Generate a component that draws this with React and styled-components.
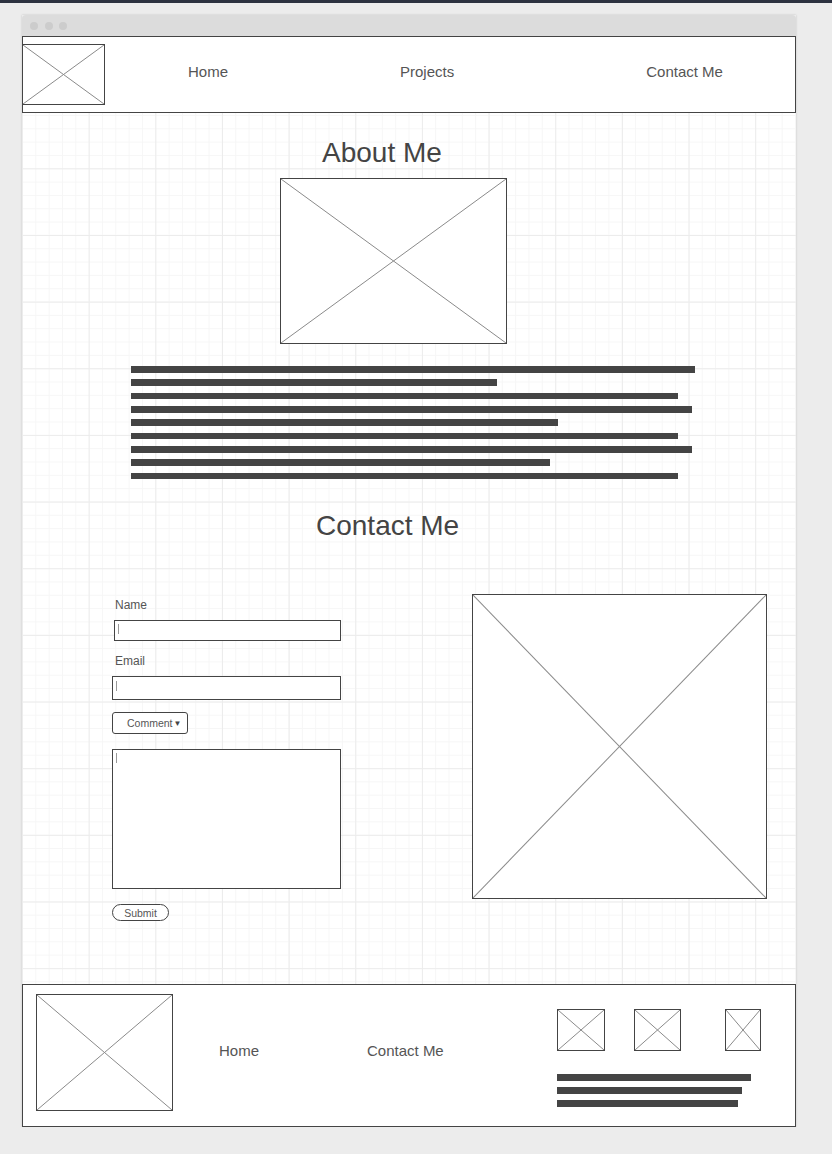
import React from 'react'
import styled, { createGlobalStyle } from 'styled-components'

const GlobalStyle = createGlobalStyle`
  html, body {
    margin: 0;
    padding: 0;
    background: #ececec;
    font-family: 'Liberation Sans', Arial, sans-serif;
  }
`

const TopBar = styled.div`
  height: 3px;
  background: #2d3240;
`
const Window = styled.div`
  width: 774px;
  margin: 12px 0 0 22px;
  box-shadow: 0 0 2px rgba(0, 0, 0, 0.18);
`
const TitleBar = styled.div`
  height: 21px;
  background: #dcdcdc;
  border-radius: 4px 4px 0 0;
  display: flex;
  align-items: center;
  gap: 6.5px;
  padding-left: 8px;
`
const Dot = styled.span`
  width: 8px;
  height: 8px;
  border-radius: 50%;
  background: #cccccc;
`
const Canvas = styled.div`
  background-color: #fff;
  background-image:
    linear-gradient(#ececec 1px, transparent 1px),
    linear-gradient(90deg, #ececec 1px, transparent 1px),
    linear-gradient(#f6f6f6 1px, transparent 1px),
    linear-gradient(90deg, #f6f6f6 1px, transparent 1px);
  background-size: 66.67px 66.67px, 66.67px 66.67px, 13.333px 13.333px, 13.333px 13.333px;
  background-position: 0 -1px;
`
const Header = styled.header`
  height: 75px;
  border: 1px solid #444;
  background: #fff;
  display: flex;
  align-items: flex-start;
`
const NavLink = styled.a`
  font-size: 15px;
  line-height: 18px;
  color: #555;
  margin-left: ${p => p.$ml}px;
  margin-top: 26px;
  text-decoration: none;
`
const Box = styled.div`
  position: relative;
  flex: none;
  box-sizing: border-box;
  width: ${p => p.$w}px;
  height: ${p => p.$h}px;
  border: 1px solid #444;
  background: #fff;
  margin-left: ${p => p.$ml || 0}px;
  margin-top: ${p => p.$mt || 0}px;
  svg {
    display: block;
    width: 100%;
    height: 100%;
  }
`

const Placeholder = props => (
  <Box {...props}>
    <svg viewBox="0 0 100 100" preserveAspectRatio="none">
      <line x1="0" y1="0" x2="100" y2="100" stroke="#8a8a8a" strokeWidth="1" vectorEffect="non-scaling-stroke" />
      <line x1="100" y1="0" x2="0" y2="100" stroke="#8a8a8a" strokeWidth="1" vectorEffect="non-scaling-stroke" />
    </svg>
  </Box>
)

const Main = styled.main`
  padding-bottom: 63px;
`
const Heading = styled.h2`
  margin: ${p => p.$mt}px 0 0 ${p => p.$ml}px;
  font-size: 28px;
  line-height: 32px;
  font-weight: 400;
  color: #444;
  width: fit-content;
`
const TextBlock = styled.div`
  display: flex;
  flex-direction: column;
  gap: 6.67px;
  margin: 22px 0 0 109px;
`
const Bar = styled.div`
  height: 6.67px;
  background: #444;
  width: ${p => p.$w}px;
`
const ContactRow = styled.section`
  display: flex;
  align-items: flex-start;
  margin-top: 51px;
  padding-left: 90px;
`
const Form = styled.form`
  width: 229px;
  display: flex;
  flex-direction: column;
  align-items: flex-start;
  margin-right: 131px;
`
const Label = styled.label`
  font-size: 12px;
  line-height: 16px;
  color: #555;
  margin: ${p => p.$mt}px 0 0 3px;
`
const Field = styled.div`
  box-sizing: border-box;
  border: 1px solid #444;
  background: #fff;
  width: ${p => p.$w}px;
  height: ${p => p.$h}px;
  margin: ${p => p.$mt}px 0 0 ${p => p.$ml || 0}px;
`
const Caret = styled.span`
  display: block;
  width: 1px;
  height: 10px;
  background: #999;
  margin: ${p => p.$top}px 0 0 3px;
`
const Dropdown = styled.div`
  box-sizing: border-box;
  width: 76px;
  height: 22px;
  margin-top: 12px;
  border: 1px solid #444;
  border-radius: 3px;
  background: #fff;
  font-size: 10.5px;
  color: #555;
  display: flex;
  align-items: center;
  padding-left: 14px;
  span {
    font-size: 8px;
    margin-left: 1px;
    color: #444;
  }
`
const Submit = styled.button`
  box-sizing: border-box;
  width: 57px;
  height: 17px;
  margin-top: 15px;
  padding: 0;
  border: 1px solid #444;
  border-radius: 9px;
  background: #fff;
  font-family: inherit;
  font-size: 10.5px;
  color: #555;
`
const Footer = styled.footer`
  border: 1px solid #444;
  background: #fff;
  display: flex;
  align-items: flex-start;
  padding: 9px 0 0 13px;
  box-sizing: border-box;
  height: 143px;
`
const FooterLink = styled(NavLink)`
  margin-top: 48px;
`
const Social = styled.div`
  margin: 15px 0 0 113px;
`
const IconRow = styled.div`
  display: flex;
`
const FooterBars = styled.div`
  display: flex;
  flex-direction: column;
  gap: 6.5px;
  margin-top: 23px;
`

const aboutBars = [564, 366, 547, 561, 427, 547, 561, 419, 547]
const footerBars = [194, 185, 181]

const App = () => {
  return (
    <>
      <GlobalStyle />
      <TopBar />
      <Window>
        <TitleBar>
          <Dot />
          <Dot />
          <Dot />
        </TitleBar>
        <Canvas>
          <Header>
            <Placeholder $w={83} $h={61} $ml={-1} $mt={7} />
            <NavLink $ml={83}>Home</NavLink>
            <NavLink $ml={172}>Projects</NavLink>
            <NavLink $ml={192}>Contact Me</NavLink>
          </Header>
          <Main>
            <Heading $mt={24} $ml={300}>About Me</Heading>
            <Placeholder $w={227} $h={166} $ml={258} $mt={9} />
            <TextBlock>
              {aboutBars.map((w, i) => <Bar key={i} $w={w} />)}
            </TextBlock>
            <Heading $mt={31} $ml={294}>Contact Me</Heading>
            <ContactRow>
              <Form>
                <Label $mt={4}>Name</Label>
                <Field $w={227} $h={21} $mt={7} $ml={2}><Caret $top={3} /></Field>
                <Label $mt={12}>Email</Label>
                <Field $w={229} $h={24} $mt={7}><Caret $top={4} /></Field>
                <Dropdown>Comment<span>▼</span></Dropdown>
                <Field $w={229} $h={140} $mt={15}><Caret $top={3} /></Field>
                <Submit type="button">Submit</Submit>
              </Form>
              <Placeholder $w={295} $h={305} $mt={1} />
            </ContactRow>
          </Main>
          <Footer>
            <Placeholder $w={137} $h={117} />
            <FooterLink $ml={46}>Home</FooterLink>
            <FooterLink $ml={108}>Contact Me</FooterLink>
            <Social>
              <IconRow>
                <Placeholder $w={48} $h={42} />
                <Placeholder $w={47} $h={42} $ml={29} />
                <Placeholder $w={36} $h={42} $ml={44} />
              </IconRow>
              <FooterBars>
                {footerBars.map((w, i) => <Bar key={i} $w={w} />)}
              </FooterBars>
            </Social>
          </Footer>
        </Canvas>
      </Window>
    </>
  )
}

export default App
